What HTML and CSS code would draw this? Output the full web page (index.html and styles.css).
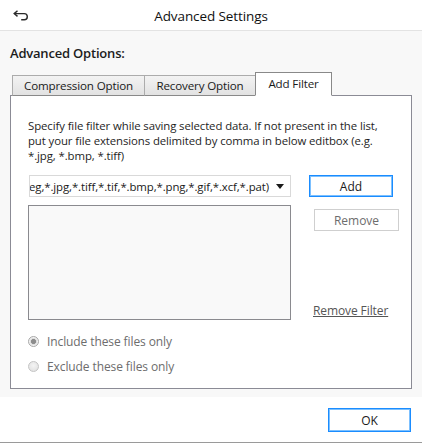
FILE: index.html
```html
<!DOCTYPE html>
<html>
<head>
<meta charset="utf-8">
<link rel="stylesheet" href="styles.css">
</head>
<body>
<div class="window">
  <header class="titlebar">
    <svg class="back" viewBox="0 0 16 11" width="16" height="11">
      <path d="M4.5 0.8 L1.2 3.6 L4.5 6.4" fill="none" stroke="#2a2a2a" stroke-width="1.4"/>
      <path d="M1.5 3.6 H11.2 A3.1 3.1 0 0 1 11.2 9.8 H8.2" fill="none" stroke="#2a2a2a" stroke-width="1.4"/>
    </svg>
    <h1 class="title">Advanced Settings</h1>
  </header>
  <main class="content">
    <h2 class="section">Advanced Options:</h2>
    <div class="tabs">
      <div class="tab t1">Compression Option</div>
      <div class="tab t2">Recovery Option</div>
      <div class="tab active">Add Filter</div>
    </div>
    <div class="panel">
      <p class="desc">Specify file filter while saving selected data. If not present in the list, put your file extensions delimited by comma in below editbox (e.g. *.jpg, *.bmp, *.tiff)</p>
      <div class="filter-row">
        <div class="combo">
          <div class="combo-value"><span>Image Files(*.jpeg,*.jpg,*.tiff,*.tif,*.bmp,*.png,*.gif,*.xcf,*.pat)</span></div>
          <span class="combo-arrow"></span>
        </div>
        <button class="btn primary add">Add</button>
      </div>
      <div class="list-row">
        <div class="listbox"></div>
        <div class="side">
          <button class="btn disabled remove">Remove</button>
          <a class="link">Remove Filter</a>
        </div>
      </div>
      <div class="radios">
        <label class="radio"><span class="dot checked"></span>Include these files only</label>
        <label class="radio"><span class="dot"></span>Exclude these files only</label>
      </div>
    </div>
  </main>
  <footer class="footer">
    <button class="btn primary ok">OK</button>
  </footer>
</div>
</body>
</html>
```
FILE: styles.css
```css
* { box-sizing: border-box; }
html, body { margin: 0; padding: 0; background: #fff; }
body {
  font-family: "Open Sans", "Noto Sans", sans-serif;
  font-size: 12px;
  color: #1a1a1a;
}
.window {
  width: 422px;
  height: 443px;
  display: flex;
  flex-direction: column;
  background: #fff;
}
.titlebar {
  height: 31px;
  flex: none;
  border-bottom: 1px solid #e3e3e3;
  display: flex;
  align-items: center;
  justify-content: center;
  position: relative;
  background: #fff;
}
.back {
  position: absolute;
  left: 13px;
  top: 10px;
}
.title {
  margin: 0;
  font-size: 13.5px;
  font-weight: 400;
  color: #111;
  letter-spacing: -0.1px;
  padding-top: 1px;
}
.content {
  flex: none;
  height: 366px;
  background: #f8f8f8;
  padding: 0 10px 8px 10px;
  display: flex;
  flex-direction: column;
}
.section {
  margin: 0;
  font-size: 13px;
  font-weight: 600;
  color: #1c1c1c;
  height: 42px;
  line-height: 20px;
  padding-top: 12px;
  letter-spacing: -0.2px;
}
.tabs {
  display: flex;
  align-items: flex-end;
  padding-left: 2px;
  height: 23px;
  margin-bottom: -1px;
  position: relative;
  z-index: 1;
}
.tab {
  height: 21px;
  padding: 0;
  border: 1px solid #acacac;
  border-bottom: 1px solid #898989;
  background: linear-gradient(#f3f3f3, #e2e2e2);
  font-size: 11.6px;
  line-height: 19px;
  color: #1a1a1a;
  margin-right: -1px;
  letter-spacing: -0.15px;
  white-space: nowrap;
  text-align: center;
}
.t1 { width: 133px; }
.t2 { width: 112px; }
.tab.active {
  height: 24px;
  width: 77px;
  background: #fff;
  border-color: #898989;
  border-bottom: 1px solid #fff;
  line-height: 21px;
}
.panel {
  flex: 1;
  border: 1px solid #8b8b95;
  background: #fff;
  padding: 22px 10px 0 17px;
  display: flex;
  flex-direction: column;
}
.desc {
  margin: 0;
  line-height: 15px;
  font-size: 11.4px;
  color: #1e1e1e;
  letter-spacing: -0.1px;
  width: 370px;
}
.filter-row {
  display: flex;
  align-items: center;
  margin-top: 12px;
}
.combo {
  width: 262px;
  height: 22px;
  border: 1px solid #d9d9d9;
  background: #fff;
  display: flex;
  align-items: center;
  padding-right: 6px;
  margin-left: 1px;
}
.combo-value {
  flex: 1;
  overflow: hidden;
  display: flex;
  justify-content: flex-end;
  white-space: nowrap;
  font-size: 11.4px;
  letter-spacing: -0.1px;
  padding-right: 7px;
}
.combo-arrow {
  width: 0;
  height: 0;
  border-left: 4px solid transparent;
  border-right: 4px solid transparent;
  border-top: 5px solid #1a1a1a;
}
.btn {
  font-family: inherit;
  font-size: 12px;
  background: #fff;
  height: 22px;
  padding: 0;
  color: #1a1a1a;
}
.btn.primary {
  border: 1px solid #1a8cff;
  box-shadow: inset 0 0 0 1px #7cc0ff;
}
.add {
  width: 84px;
  margin-left: 18px;
}
.list-row {
  display: flex;
  margin-top: 8px;
}
.listbox {
  width: 263px;
  height: 115px;
  border: 1px solid #8a8a8f;
  background: #f9f9f9;
}
.side {
  display: flex;
  flex-direction: column;
  align-items: flex-start;
  justify-content: space-between;
  padding-left: 22px;
  padding-top: 4px;
  padding-bottom: 1px;
}
.btn.disabled {
  border: 1px solid #cfcfcf;
  color: #6d6d6d;
}
.remove {
  width: 85px;
  margin-left: 1px;
}
.link {
  color: #555;
  text-decoration: underline;
  font-size: 12px;
  letter-spacing: -0.1px;
  line-height: 16px;
}
.radios {
  display: flex;
  flex-direction: column;
  margin-top: 9px;
}
.radio {
  display: flex;
  align-items: center;
  height: 25px;
  color: #6d6d6d;
  font-size: 12px;
  letter-spacing: -0.1px;
}
.dot {
  width: 11px;
  height: 11px;
  border-radius: 50%;
  border: 1px solid #c4c4c4;
  background: radial-gradient(circle at 50% 40%, #f4f4f4, #dedede);
  margin-right: 8px;
}
.dot.checked {
  border-color: #a8a8a8;
  background: radial-gradient(circle, #8c8c8c 0 2.2px, #d8d8d8 2.8px, #f2f2f2 4px);
}
.footer {
  flex: 1;
  background: #fff;
  border-bottom: 1px solid #9a9a9a;
  display: flex;
  justify-content: flex-end;
  align-items: flex-start;
  padding: 11px 11px 0 0;
}
.ok {
  width: 83px;
  height: 24px;
}
```
